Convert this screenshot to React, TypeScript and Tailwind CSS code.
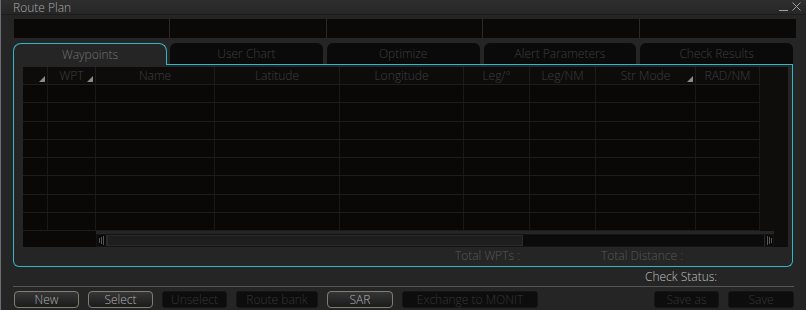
import React from "react";

const columns = [
  { label: "", w: "w-[25px]", sort: true },
  { label: "WPT", w: "w-[48px]", sort: true },
  { label: "Name", w: "w-[119px]", sort: false },
  { label: "Latitude", w: "w-[125px]", sort: false },
  { label: "Longitude", w: "w-[124px]", sort: false },
  { label: "Leg/°", w: "w-[66px]", sort: false },
  { label: "Leg/NM", w: "w-[66px]", sort: false },
  { label: "Str Mode", w: "w-[100px]", sort: true },
  { label: "RAD/NM", w: "w-[64px]", sort: false },
];

const tabs = ["User Chart", "Optimize", "Alert Parameters", "Check Results"];

const buttons = [
  { label: "New", w: "w-[65px]", on: true },
  { label: "Select", w: "w-[65px]", on: true },
  { label: "Unselect", w: "w-[65px]", on: false },
  { label: "Route bank", w: "w-[82px]", on: false },
  { label: "SAR", w: "w-[66px]", on: true },
  { label: "Exchange to MONIT", w: "w-[136px]", on: false },
];

const SortMark = () => (
  <svg className="absolute right-[2px] bottom-[2px]" width="6" height="6" viewBox="0 0 6 6">
    <polygon points="6,0 6,6 0,6" fill="#8a8a8a" />
  </svg>
);

const Btn = ({ label, w, on }: { label: string; w: string; on: boolean }) =>
  on ? (
    <button className={`${w} h-[17px] rounded-[4px] border border-[#7f7f70] bg-gradient-to-b from-[#363636] to-[#1b1b1b] text-[12px] font-light leading-none text-[#b0b0b0]`}>
      {label}
    </button>
  ) : (
    <button className={`${w} h-[17px] rounded-[3px] border border-[#151515] bg-[#0d0d0d] text-[12px] font-light leading-none text-[#363636]`}>
      {label}
    </button>
  );

export default function App() {
  return (
    <div
      className="w-[806px] h-[310px] bg-[#252525] flex flex-col border-l border-[#6a6e74] overflow-hidden font-light"
      style={{ fontFamily: '"Open Sans", "Noto Sans", sans-serif' }}
    >
      {/* title bar */}
      <div className="h-[15px] flex items-start justify-between bg-gradient-to-b from-[#2f2f2f] to-[#262626] border-b border-[#1c1c1c] pl-[12px] pr-[5px] pt-[2px]">
        <span className="text-[12px] leading-[12px] text-[#aaaaaa]">Route Plan</span>
        <div className="flex items-start gap-[4px]">
          <span className="w-[9px] h-[9px] border-b border-[#a0a0a0]" />
          <svg width="9" height="9" viewBox="0 0 9 9">
            <path d="M0.5 0.5 L8.5 8.5 M8.5 0.5 L0.5 8.5" stroke="#a0a0a0" strokeWidth="1" />
          </svg>
        </div>
      </div>

      {/* info bar */}
      <div className="mt-[4px] ml-[13px] w-[782px] h-[19px] grid grid-cols-5 bg-[#0a0908]">
        {[0, 1, 2, 3, 4].map((i) => (
          <div key={i} className={i < 4 ? "border-r border-[#2c2a1e]" : ""} />
        ))}
      </div>

      {/* tabs */}
      <div className="mt-[5px] ml-[12px] h-[22px] flex">
        <div className="w-[154px] h-full rounded-t-[8px] border-t border-l border-r border-[#33b6c6] flex items-center justify-center text-[12px] text-[#727272]">
          Waypoints
        </div>
        <div className="flex gap-[4px] pl-[3px] border-b border-[#33b6c6] w-[626px]">
          {tabs.map((t) => (
            <div
              key={t}
              className="w-[153px] h-full rounded-t-[6px] bg-[#0b0a0a] flex items-center justify-center text-[12px] text-[#3e3e3e]"
            >
              {t}
            </div>
          ))}
        </div>
      </div>

      {/* panel */}
      <div className="ml-[12px] w-[780px] h-[202px] border-l border-r border-b border-[#33b6c6] rounded-b-[6px] pt-[2px] pl-[9px] flex flex-col">
        <div className="w-[765px] h-[180px] flex flex-col">
          <div className="flex h-[164px]">
            <div className="flex flex-col w-[737px] bg-[#0a0807]">
              <div className="flex h-[18px] bg-[#0d0c0b] border-b border-[#1e1d1c]">
                {columns.map((c, i) => (
                  <div
                    key={i}
                    className={`${c.w} relative h-full border-r border-[#1e1d1c] flex items-center justify-center text-[12px] leading-none text-[#3f3f3f]`}
                  >
                    {c.label}
                    {c.sort && <SortMark />}
                  </div>
                ))}
              </div>
              {[0, 1, 2, 3, 4, 5, 6, 7].map((r) => (
                <div key={r} className="flex h-[18.25px] border-b border-[#1e1c1a]">
                  {columns.map((c, i) => (
                    <div key={i} className={`${c.w} h-full border-r border-[#1b1918]`} />
                  ))}
                </div>
              ))}
            </div>
            <div className="w-[28px] bg-[#0e0d0c]" />
          </div>
          <div className="flex h-[16px]">
            <div className="w-[73px] bg-[#0a0908]" />
            <div className="w-[678px] h-[13px] mt-[3px] flex bg-[#0c0b0b] border border-[#141414]">
              <div className="w-[10px] h-full flex items-center justify-center gap-[1px] border-r border-[#2a2a2a]">
                <span className="w-[1px] h-[5px] bg-[#555]" />
                <span className="w-[1px] h-[7px] bg-[#555]" />
                <span className="w-[1px] h-[9px] bg-[#555]" />
              </div>
              <div className="w-[416px] h-full bg-[#1e1e1e] border border-[#2a2a2a]" />
              <div className="flex-1" />
              <div className="w-[9px] h-full flex items-center justify-center gap-[1px] border-l border-[#2a2a2a]">
                <span className="w-[1px] h-[9px] bg-[#555]" />
                <span className="w-[1px] h-[7px] bg-[#555]" />
                <span className="w-[1px] h-[5px] bg-[#555]" />
              </div>
            </div>
            <div className="w-[14px] bg-[#0e0d0c]" />
          </div>
        </div>
        <div className="flex mt-[2px] h-[14px] items-center text-[12px] leading-none text-[#575757]">
          <span className="w-[497px] text-right">Total WPTs :</span>
          <span className="ml-[81px]">Total Distance :</span>
        </div>
      </div>

      {/* status */}
      <div className="h-[19px] flex items-center pt-[1px]">
        <span className="ml-[644px] text-[12px] leading-none text-[#c0c0c0]">Check Status:</span>
      </div>
      <div className="h-[1px] mx-[12px] bg-[#555555]" />

      {/* buttons */}
      <div className="mt-[4px] ml-[13px] flex gap-[9px]">
        {buttons.map((b) => (
          <Btn key={b.label} {...b} />
        ))}
        <div className="flex-1" />
        <Btn label="Save as" w="w-[65px]" on={false} />
        <Btn label="Save" w="w-[66px]" on={false} />
        <div className="w-[3px]" />
      </div>
    </div>
  );
}
